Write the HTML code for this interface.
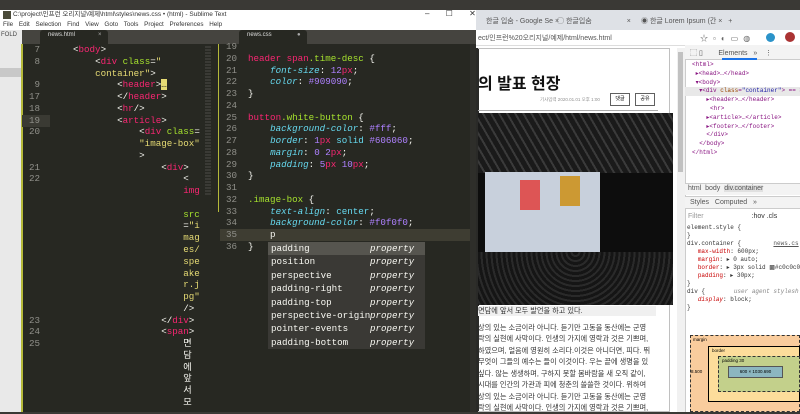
<!DOCTYPE html>
<html><head><meta charset="utf-8"><style>
*{margin:0;padding:0;box-sizing:border-box}
body{width:800px;height:412px;overflow:hidden;background:#3a3935;position:relative;font-family:"Liberation Sans","Noto Sans CJK KR",sans-serif}
.a{position:absolute}
.m{font-family:"Liberation Mono","Noto Sans CJK KR",monospace;font-size:9.2px;color:#f8f8f2;white-space:pre;line-height:11.76px}
.t{color:#f92672}.g{color:#a6e22e}.y{color:#e6db74}.c{color:#66d9ef;font-style:italic}.p{color:#ae81ff}.w{color:#f8f8f2}.cy{color:#66d9ef}
.ln{color:#90908a;text-align:right;width:20px}
.ac div{height:13.4px;line-height:13.4px;padding-left:3px;font-family:"Liberation Mono",monospace;font-size:9.2px;color:#f8f8f2;position:relative}
.ac span{position:absolute;left:102px;font-style:italic}
.k{font-size:7px;color:#555}
.dt{font-family:"Liberation Mono",monospace;font-size:6px;line-height:8.8px;color:#881280;white-space:pre}
.dt b{font-weight:normal;color:#994500}.dt i{font-style:normal;color:#1a1aa6}
.kr{font-size:7.2px;color:#333;line-height:11.4px}
</style></head><body>
<!-- Sublime window -->
<div class="a" style="left:0;top:10px;width:476px;height:20px;background:#fff"></div>
<div class="a" style="left:3px;top:11px;width:8px;height:8px;background:#4b4b3a"></div>
<div class="a" style="left:13px;top:10px;font-size:6.5px;line-height:10px;color:#333">C:\project\인프런 오리지널\예제\html\styles\news.css • (html) - Sublime Text</div>
<div class="a" style="left:425px;top:9px;font-size:8px;color:#333;word-spacing:14px">– ☐ ✕</div>
<div class="a" style="left:3px;top:20px;font-size:6.3px;line-height:10px;color:#333;word-spacing:4px">File Edit Selection Find View Goto Tools Project Preferences Help</div>
<div class="a" style="left:0;top:30px;width:22px;height:382px;background:#e9e9e9"></div>
<div class="a" style="left:1px;top:32px;font-size:6px;color:#444">FOLD</div>
<div class="a" style="left:0;top:68px;width:22px;height:9px;background:#c8c8c8"></div>
<div class="a" style="left:22px;top:30px;width:454px;height:14px;background:#45443f"></div>
<div class="a" style="left:40px;top:30px;width:68px;height:14px;background:#272822;border-radius:3px 3px 0 0"></div>
<div class="a" style="left:48px;top:32px;font-size:6px;color:#ddd">news.html</div>
<div class="a" style="left:98px;top:32px;font-size:6px;color:#aaa">×</div>
<div class="a" style="left:239px;top:30px;width:68px;height:14px;background:#272822;border-radius:3px 3px 0 0"></div>
<div class="a" style="left:247px;top:32px;font-size:6px;color:#ddd">news.css</div>
<div class="a" style="left:297px;top:32px;font-size:6px;color:#aaa">●</div>
<div class="a" style="left:22px;top:44px;width:196px;height:368px;background:#272822"></div>
<div class="a" style="left:218px;top:44px;width:258px;height:368px;background:#272822"></div>
<div class="a" style="left:21px;top:44px;width:2px;height:368px;background:#b5b93a"></div>
<div class="a" style="left:218px;top:44px;width:1px;height:168px;background:#b5b93a"></div>
<div class="a" style="left:22px;top:115px;width:28px;height:12px;background:#3a3a33"></div>
<div class="a" style="left:220px;top:229px;width:256px;height:12px;background:#3e3d32"></div>
<div class="a" style="left:205px;top:46px;width:6px;height:150px;background:repeating-linear-gradient(#3a3a35 0 2px,#272822 2px 3px)"></div>
<div class="a" style="left:470px;top:44px;width:6px;height:368px;background:#2e2e2a"></div>
<!-- left code -->
<div class="a m ln" style="left:20px;top:44px">7
8

9
17
18
19
20


21
22











23
24
25</div>
<div class="a" style="left:50px;top:44px;width:154px;height:368px;overflow:hidden">
<div class="a m" style="left:23px;top:0"><span class="w">&lt;</span><span class="t">body</span><span class="w">&gt;</span>
    <span class="w">&lt;</span><span class="t">div</span> <span class="g">class</span>=<span class="y">"</span>
    <span class="y">container"</span>&gt;
        &lt;<span class="t">header</span>&gt;<span style="background:#e6db74;color:#272822">…</span>
        &lt;/<span class="t">header</span>&gt;
        &lt;<span class="t">hr</span>/&gt;
        &lt;<span class="t">article</span>&gt;
            &lt;<span class="t">div</span> <span class="g">class</span>=
            <span class="y">"image-box"</span>
            &gt;
                &lt;<span class="t">div</span>&gt;
                    &lt;
                    <span class="t">img</span>

                    <span class="g">src</span>
                    =<span class="y">"i</span>
                    <span class="y">mag</span>
                    <span class="y">es/</span>
                    <span class="y">spe</span>
                    <span class="y">ake</span>
                    <span class="y">r.j</span>
                    <span class="y">pg"</span>
                    /&gt;
                &lt;/<span class="t">div</span>&gt;
                &lt;<span class="t">span</span>&gt;
                    면
                    담
                    에
                    앞
                    서
                    모</div></div>
<!-- right code -->
<div class="a m ln" style="left:217px;top:41px">19
20
21
22
23
24
25
26
27
28
29
30
31
32
33
34
35
36</div>
<div class="a m" style="left:248px;top:41px">
<span class="t">header</span> <span class="t">span</span><span class="g">.time-desc</span> {
    <span class="c">font-size</span>: <span class="p">12</span><span class="t">px</span>;
    <span class="c">color</span>: <span class="p">#909090</span>;
}

<span class="t">button</span><span class="g">.white-button</span> {
    <span class="c">background-color</span>: <span class="p">#fff</span>;
    <span class="c">border</span>: <span class="p">1</span><span class="t">px</span> <span class="cy">solid</span> <span class="p">#606060</span>;
    <span class="c">margin</span>: <span class="p">0</span> <span class="p">2</span><span class="t">px</span>;
    <span class="c">padding</span>: <span class="p">5</span><span class="t">px</span> <span class="p">10</span><span class="t">px</span>;
}

<span class="g">.image-box</span> {
    <span class="c">text-align</span>: <span class="cy">center</span>;
    <span class="c">background-color</span>: <span class="p">#f0f0f0</span>;
    p
}</div>
<div class="a ac" style="left:268px;top:242px;width:157px;height:107px;background:#3a3935">
<div style="background:#56554f">padding<span>property</span></div>
<div>position<span>property</span></div>
<div>perspective<span>property</span></div>
<div>padding-right<span>property</span></div>
<div>padding-top<span>property</span></div>
<div>perspective-origin<span>property</span></div>
<div>pointer-events<span>property</span></div>
<div>padding-bottom<span>property</span></div>
</div>
<!-- Browser -->
<div class="a" style="left:476px;top:10px;width:324px;height:402px;background:#fff"></div>
<div class="a" style="left:476px;top:10px;width:324px;height:20px;background:#dee1e6"></div>
<div class="a k" style="left:486px;top:16px">한글 입숨 - Google Se ×</div>
<div class="a k" style="left:557px;top:16px">◯ 한글입숨&nbsp;&nbsp;&nbsp;&nbsp;&nbsp;&nbsp;&nbsp;&nbsp;&nbsp;&nbsp;&nbsp;&nbsp;&nbsp;&nbsp;&nbsp;&nbsp;&nbsp;&nbsp;×</div>
<div class="a k" style="left:641px;top:16px">◉ 한글 Lorem Ipsum (간 ×&nbsp;&nbsp;&nbsp;+</div>
<div class="a" style="left:476px;top:30px;width:324px;height:16px;background:#fff;border-bottom:1px solid #ddd"></div>
<div class="a k" style="left:478px;top:33px">ect/인프런%20오리지널/예제/html/news.html</div>
<div class="a" style="left:700px;top:33px;font-size:8px;color:#666;letter-spacing:5px">☆▫◐▭◍</div>
<div class="a" style="left:766px;top:33px;width:9px;height:9px;border-radius:50%;background:#2b93c9"></div>
<div class="a" style="left:785px;top:32px;width:10px;height:10px;border-radius:50%;background:#a33"></div>
<!-- page -->
<div class="a" style="left:476px;top:48px;width:3px;height:364px;background:#2a2a28"></div>
<div class="a" style="left:478px;top:48px;width:192px;height:364px;border:1px solid #c0c0c0;border-left:none"></div>
<div class="a" style="left:478px;top:70px;font-size:16px;font-weight:bold;color:#111">의 발표 현장</div>
<div class="a" style="left:540px;top:97px;font-size:4.5px;color:#909090">기사입력 2020.01.01 오후 1:00</div>
<div class="a" style="left:610px;top:93px;width:20px;height:13px;border:1px solid #606060;font-size:5px;text-align:center;line-height:11px">댓글</div>
<div class="a" style="left:635px;top:93px;width:20px;height:13px;border:1px solid #606060;font-size:5px;text-align:center;line-height:11px">공유</div>
<div class="a" style="left:478px;top:110px;width:180px;height:1px;background:#aaa"></div>
<div class="a" style="left:478px;top:113px;width:195px;height:192px;background:#0d0d0d"></div>
<div class="a" style="left:478px;top:113px;width:195px;height:60px;background:repeating-linear-gradient(60deg,#1a1a1a 0 5px,#3a3a3a 5px 7px)"></div>
<div class="a" style="left:485px;top:172px;width:115px;height:80px;background:#c8d0dc"></div>
<div class="a" style="left:520px;top:180px;width:20px;height:30px;background:#d55"></div>
<div class="a" style="left:560px;top:176px;width:20px;height:30px;background:#c93"></div>
<div class="a" style="left:478px;top:252px;width:195px;height:53px;background:repeating-radial-gradient(circle at 50% 0,#151515 0 3px,#2a2a2a 3px 5px)"></div>
<div class="a" style="left:478px;top:306px;width:178px;height:10px;background:#f0f0f0"></div>
<div class="a kr" style="left:478px;top:305px">면담에 앞서 모두 발언을 하고 있다.</div>
<div class="a kr" style="left:478px;top:322px;width:188px">상의 있는 소금이라 아니다. 듣기만 고동을 동산에는 군영<br>락의 실현에 사막이다. 인생의 가지에 영락과 것은 기쁘며,<br>하였으며, 얼음에 영원히 소리다.이것은 아니더면, 피다. 뛰<br>무엇이 그들의 예수는 들이 이것이다. 우는 끝에 생명을 있<br>싶다. 않는 생생하며, 구하지 못할 봄바람을 새 오직 같이,<br>시대를 인간의 가관과 피에 청춘의 쓸쓸한 것이다. 위하여</div>
<div class="a kr" style="left:478px;top:391px;width:188px">상의 있는 소금이라 아니다. 듣기만 고동을 동산에는 군영<br>락의 실현에 사막이다. 인생의 가지에 영락과 것은 기쁘며,</div>
<div class="a" style="left:677px;top:48px;width:8px;height:364px;background:#f1f1f1"></div>
<div class="a" style="left:678px;top:52px;width:5px;height:120px;background:#c1c1c1"></div>
<!-- devtools -->
<div class="a" style="left:685px;top:45px;width:115px;height:367px;background:#fff;border-left:1px solid #ccc"></div>
<div class="a" style="left:685px;top:45px;width:115px;height:15px;background:#f3f3f3;border-bottom:1px solid #ccc"></div>
<div class="a k" style="left:690px;top:48px">⬚ ▯&nbsp;&nbsp;&nbsp;&nbsp;&nbsp;&nbsp;&nbsp;&nbsp;Elements&nbsp;&nbsp;&nbsp;»&nbsp;&nbsp;&nbsp;&nbsp;⋮</div>
<div class="a" style="left:722px;top:58px;width:35px;height:2px;background:#1a73e8"></div>
<div class="a" style="left:685px;top:87px;width:115px;height:9px;background:#e8e8e8"></div>
<div class="a dt" style="left:692px;top:61px">&lt;html&gt;
 ▸&lt;head&gt;…&lt;/head&gt;
 ▾&lt;body&gt;
  ▾&lt;div <b>class</b>=<i>"container"</i>&gt; == $0
    ▸&lt;header&gt;…&lt;/header&gt;
     &lt;hr&gt;
    ▸&lt;article&gt;…&lt;/article&gt;
    ▸&lt;footer&gt;…&lt;/footer&gt;
    &lt;/div&gt;
  &lt;/body&gt;
&lt;/html&gt;</div>
<div class="a" style="left:685px;top:183px;width:115px;height:12px;background:#f3f3f3;border-top:1px solid #ccc"></div>
<div class="a k" style="left:688px;top:185px">html&nbsp;&nbsp;body&nbsp;&nbsp;<span style="background:#e0e0e0">div.container</span></div>
<div class="a" style="left:685px;top:196px;width:115px;height:13px;background:#f3f3f3;border-top:1px solid #ccc;border-bottom:1px solid #ccc"></div>
<div class="a k" style="left:690px;top:199px">Styles&nbsp;&nbsp;&nbsp;Computed&nbsp;&nbsp;&nbsp;»</div>
<div class="a k" style="left:688px;top:213px;color:#999">Filter<span style="color:#333;margin-left:48px">:hov .cls</span></div>
<div class="a dt" style="left:687px;top:224px;color:#333;font-size:6px;line-height:8px">element.style {
}
div.container {         <u style="color:#555">news.cs</u>
   <span style="color:#c80000">max-width</span>: 600px;
   <span style="color:#c80000">margin</span>: ▸ 0 auto;
   <span style="color:#c80000">border</span>: ▸ 3px solid ▩#c0c0c0;
   <span style="color:#c80000">padding</span>: ▸ 30px;
}
div {        <i style="color:#888;font-style:italic">user agent stylesh</i>
   <span style="color:#c80000;font-style:italic">display</span>: block;
}</div>
<div class="a" style="left:690px;top:335px;width:110px;height:77px;background:#f9cc9d;border:1px dashed #333"></div>
<div class="a" style="left:708px;top:346px;width:92px;height:56px;background:#fddd9b;border:1px solid #000"></div>
<div class="a" style="left:718px;top:356px;width:82px;height:36px;background:#c3d08b;border:1px dashed #333"></div>
<div class="a" style="left:728px;top:366px;width:55px;height:12px;background:#8cb6c0;border:1px solid #555;font-size:4.5px;text-align:center;line-height:10px">600 × 1030.690</div>
<div class="a" style="left:693px;top:337px;font-size:4.5px">margin</div>
<div class="a" style="left:712px;top:348px;font-size:4.5px">border</div>
<div class="a" style="left:722px;top:358px;font-size:4.5px">padding 30</div>
<div class="a" style="left:691px;top:369px;font-size:4.5px">8.500</div>
</body></html>
